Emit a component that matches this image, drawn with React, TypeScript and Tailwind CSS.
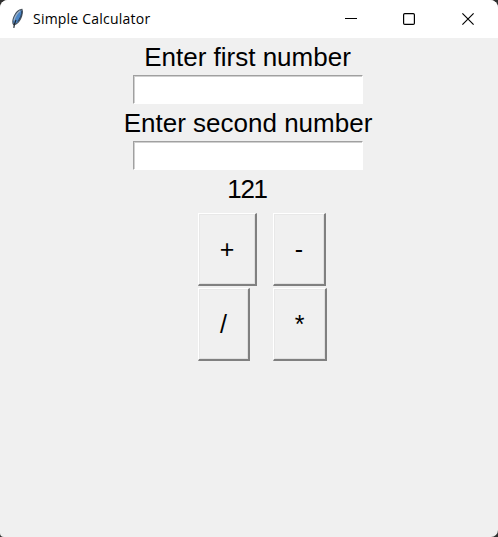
const label = "flex items-center justify-center whitespace-pre text-[26px] leading-none text-black";
const entry =
  "block h-[29px] w-[230px] border border-l-[#a0a0a0] border-t-[#a0a0a0] border-r-white border-b-white bg-white px-1 text-[26px] shadow-[inset_1px_1px_0_#d0d0d0] outline-none";
const key =
  "flex h-[73px] items-center justify-center border-t border-l border-r-2 border-b-2 border-t-white border-l-white border-r-[#808080] border-b-[#808080] bg-[#f0f0f0] pt-px text-[25px] leading-none text-black shadow-[inset_1px_1px_0_#e8e8e8,inset_-1px_-1px_0_#e0e0e0]";

function Feather() {
  return (
    <svg className="h-[22px] w-4" viewBox="0 0 16 22" fill="none">
      <path d="M13 1.4C9.6 1.9 6.6 4.9 5 8.6C3.7 11.6 3.3 14.8 4.6 16.6C7.4 16.4 10.2 13.8 11.8 10.2C13.2 7 13.8 3.6 13 1.4Z" fill="#4c86c6" stroke="#4a535d" strokeWidth="1.1" />
      <path d="M11.2 2.8C8.4 4.8 6 8.6 5 12.6" stroke="#a4b2c2" strokeWidth="1.2" />
      <path d="M12.8 3C13 6 11.2 10.6 8.6 13.6" stroke="#24384f" strokeWidth="0.9" />
      <path d="M7 12C5.8 14.6 5.2 16.8 4.8 19.8" stroke="#202830" strokeWidth="1.2" />
    </svg>
  );
}

function TitleBar() {
  return (
    <header className="flex h-[38px] items-center bg-white pl-[9px] pb-px pr-px">
      <Feather />
      <h1 className="ml-2 flex-1 whitespace-nowrap font-['Open_Sans','Noto_Sans',sans-serif] text-[14px] leading-none tracking-[0.22px] text-black">
        Simple Calculator
      </h1>
      <div className="flex text-black">
        <button aria-label="Minimize" className="flex h-9 w-[58px] items-center justify-center pl-[2px]">
          <svg width="12" height="12" viewBox="0 0 12 12" stroke="currentColor">
            <path d="M0 5.5H12" />
          </svg>
        </button>
        <button aria-label="Maximize" className="flex h-9 w-[59px] items-center justify-center">
          <svg width="12" height="12" viewBox="0 0 12 12" fill="none" stroke="currentColor" strokeWidth="1.2">
            <rect x="0.6" y="0.6" width="10.8" height="10.8" rx="1.2" />
          </svg>
        </button>
        <button aria-label="Close" className="flex h-9 w-[59px] items-center justify-center">
          <svg width="12" height="12" viewBox="0 0 12 12" stroke="currentColor" strokeWidth="1.15">
            <path d="M0.4 0.4L11.6 11.6M11.6 0.4L0.4 11.6" />
          </svg>
        </button>
      </div>
    </header>
  );
}

export default function App() {
  return (
    <div className="h-[537px] w-[498px] bg-[#303030]">
      <div className="flex h-full flex-col overflow-hidden rounded-t-[8px] rounded-br-[7px] rounded-bl-[4px] bg-[#f0f0f0] font-['Liberation_Sans',Arial,sans-serif]">
        <TitleBar />
        <main className="flex flex-col items-center pr-[2px]">
          <label className={label + " h-[37px] pr-px"}>Enter first number</label>
          <input className={entry} />
          <label className={label + " h-[37px]"}>Enter second number</label>
          <input className={entry} />
          <output className={label + " h-[37px] pr-[2px] tracking-[-1.3px]"}>121</output>
          <div className="mt-[6px] grid w-[496px] grid-cols-[75px_60px] gap-y-[2px] pl-[198px]">
            <button className={key + " w-[59px]"}>+</button>
            <button className={key + " w-[53px]"}>-</button>
            <button className={key + " w-[52px]"}>/</button>
            <button className={key + " w-[54px]"}>*</button>
          </div>
        </main>
      </div>
    </div>
  );
}
